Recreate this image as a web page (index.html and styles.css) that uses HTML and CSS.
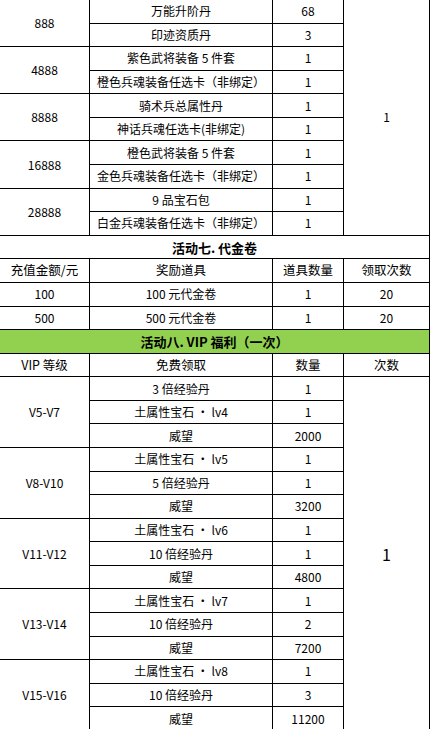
FILE: index.html
```html
<!DOCTYPE html>
<html lang="zh-CN">
<head>
<meta charset="utf-8">
<title>活动奖励</title>
<link rel="stylesheet" href="styles.css">
</head>
<body>
<div class="sheet">
  <div class="c r2">888</div><div class="c">万能升阶丹</div><div class="c">68</div><div class="c r10">1</div>
  <div class="c">印迹资质丹</div><div class="c">3</div>
  <div class="c r2">4888</div><div class="c">紫色武将装备 5 件套</div><div class="c">1</div>
  <div class="c">橙色兵魂装备任选卡（非绑定）</div><div class="c">1</div>
  <div class="c r2">8888</div><div class="c">骑术兵总属性丹</div><div class="c">1</div>
  <div class="c">神话兵魂任选卡(非绑定)</div><div class="c">1</div>
  <div class="c r2">16888</div><div class="c">橙色武将装备 5 件套</div><div class="c">1</div>
  <div class="c">金色兵魂装备任选卡（非绑定）</div><div class="c">1</div>
  <div class="c r2">28888</div><div class="c">9 品宝石包</div><div class="c">1</div>
  <div class="c">白金兵魂装备任选卡（非绑定）</div><div class="c">1</div>

  <div class="c full title">活动七. 代金卷</div>
  <div class="c head">充值金额/元</div><div class="c head">奖励道具</div><div class="c head">道具数量</div><div class="c head">领取次数</div>
  <div class="c">100</div><div class="c">100 元代金卷</div><div class="c">1</div><div class="c">20</div>
  <div class="c">500</div><div class="c">500 元代金卷</div><div class="c">1</div><div class="c">20</div>

  <div class="c full title green">活动八. VIP 福利（一次）</div>
  <div class="c head">VIP 等级</div><div class="c head">免费领取</div><div class="c head">数量</div><div class="c head">次数</div>
  <div class="c r3">V5-V7</div><div class="c">3 倍经验丹</div><div class="c">1</div><div class="c r15 big">1</div>
  <div class="c">土属性宝石 · lv4</div><div class="c">1</div>
  <div class="c">威望</div><div class="c">2000</div>
  <div class="c r3">V8-V10</div><div class="c">土属性宝石 · lv5</div><div class="c">1</div>
  <div class="c">5 倍经验丹</div><div class="c">1</div>
  <div class="c">威望</div><div class="c">3200</div>
  <div class="c r3">V11-V12</div><div class="c">土属性宝石 · lv6</div><div class="c">1</div>
  <div class="c">10 倍经验丹</div><div class="c">1</div>
  <div class="c">威望</div><div class="c">4800</div>
  <div class="c r3">V13-V14</div><div class="c">土属性宝石 · lv7</div><div class="c">1</div>
  <div class="c">10 倍经验丹</div><div class="c">2</div>
  <div class="c">威望</div><div class="c">7200</div>
  <div class="c r3">V15-V16</div><div class="c">土属性宝石 · lv8</div><div class="c">1</div>
  <div class="c">10 倍经验丹</div><div class="c">3</div>
  <div class="c">威望</div><div class="c">11200</div>
</div>
</body>
</html>
```
FILE: styles.css
```css
html, body {
  margin: 0;
  padding: 0;
  background: #ffffff;
}
body {
  font-family: "Noto Sans CJK SC", "Liberation Sans", sans-serif;
  font-size: 12px;
  font-weight: 400;
  color: #000000;
  overflow: hidden;
}
.sheet {
  display: grid;
  grid-template-columns: 89px 182px 70px 85px;
  grid-auto-rows: 22.58px;
  gap: 1px;
  padding: 1px;
  background: #000000;
  width: max-content;
  margin: -1px 0 0 -1px;
}
.c {
  background: #ffffff;
  display: flex;
  align-items: center;
  justify-content: center;
  white-space: nowrap;
  line-height: 1;
}
.r2 { grid-row: span 2; }
.r3 { grid-row: span 3; }
.r10 { grid-row: span 10; }
.r15 { grid-row: span 15; }
.full { grid-column: 1 / -1; }
.head { font-size: 12.5px; }
.title { font-weight: bold; font-size: 13px; }
.green { background: #92d050; }
.big { font-size: 16px; }
```
